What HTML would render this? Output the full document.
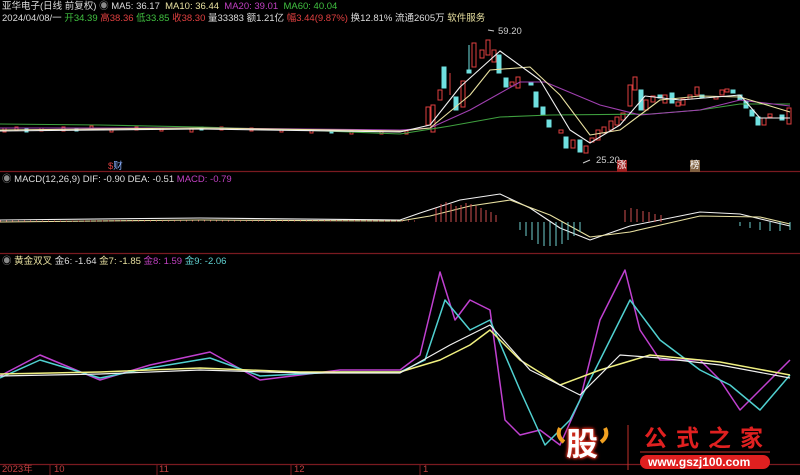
<!DOCTYPE html>
<html><head><meta charset="utf-8"><style>
html,body{margin:0;padding:0;background:#000;width:800px;height:475px;overflow:hidden}
body{position:relative;font-family:"Liberation Sans","Noto Sans CJK SC",sans-serif;font-size:9.5px}
.t{position:absolute;white-space:nowrap;line-height:12px}
</style></head><body>
<svg width="800" height="475" style="position:absolute;left:0;top:0">
<g stroke="#7a1a20" stroke-width="1.2">
<line x1="0" y1="171.5" x2="800" y2="171.5"/><line x1="0" y1="253.5" x2="800" y2="253.5"/><line x1="0" y1="464.5" x2="800" y2="464.5"/>
</g>
<g stroke="#7a1a20"><line x1="50" y1="464" x2="50" y2="475"/><line x1="157" y1="464" x2="157" y2="475"/><line x1="291" y1="464" x2="291" y2="475"/><line x1="420" y1="464" x2="420" y2="475"/></g>
<g stroke="#e04040" fill="none" stroke-width="1">
<rect x="3" y="128" width="3" height="4"/><rect x="15" y="127" width="3" height="3"/><rect x="40" y="128" width="3" height="3"/><rect x="62" y="127" width="3" height="4"/><rect x="90" y="126" width="3" height="3"/><rect x="110" y="129" width="3" height="3"/><rect x="135" y="127" width="3" height="3"/><rect x="160" y="128" width="3" height="3"/><rect x="190" y="129" width="3" height="3"/><rect x="220" y="127" width="3" height="3"/><rect x="250" y="128" width="3" height="3"/><rect x="280" y="129" width="3" height="3"/><rect x="310" y="130" width="3" height="3"/><rect x="350" y="131" width="3" height="3"/><rect x="380" y="131" width="3" height="3"/><rect x="405" y="131" width="3" height="3"/>
<rect x="426" y="107" width="4" height="18"/><rect x="431" y="105" width="4" height="27"/><rect x="438" y="90" width="4" height="10"/><line x1="450" y1="73" x2="450" y2="95"/><rect x="461" y="81" width="4" height="26"/><rect x="472" y="43" width="4" height="24"/><rect x="480" y="50" width="4" height="8"/><rect x="486" y="40" width="4" height="15"/><rect x="492" y="50" width="4" height="12"/><rect x="510" y="82" width="4" height="4"/><rect x="516" y="77" width="4" height="11"/><rect x="559" y="130" width="4" height="3"/><rect x="571" y="140" width="4" height="8"/><rect x="584" y="146" width="4" height="7"/><rect x="590" y="138" width="4" height="4"/><rect x="596" y="130" width="4" height="10"/><rect x="602" y="127" width="4" height="6"/><rect x="609" y="121" width="4" height="9"/><rect x="615" y="117" width="4" height="8"/><rect x="621" y="113" width="4" height="7"/><rect x="628" y="85" width="4" height="21"/><rect x="633" y="77" width="4" height="13"/><rect x="644" y="100" width="4" height="10"/><rect x="651" y="96" width="4" height="6"/><rect x="663" y="95" width="4" height="8"/><rect x="676" y="102" width="4" height="4"/><rect x="681" y="99" width="4" height="6"/><rect x="688" y="95" width="4" height="4"/><rect x="695" y="87" width="4" height="8"/><rect x="714" y="97" width="4" height="2"/><rect x="720" y="90" width="4" height="5"/><rect x="725" y="89" width="4" height="3"/><rect x="762" y="118" width="4" height="7"/><rect x="768" y="114" width="4" height="3"/><rect x="787" y="108" width="4" height="16"/>
</g>
<g fill="#6fe0e0" stroke="#6fe0e0">
<rect x="25" y="129" width="3" height="3"/><rect x="75" y="128" width="3" height="3"/><rect x="200" y="127" width="3" height="3"/><rect x="330" y="130" width="3" height="3"/>
<rect x="442" y="67" width="4" height="21"/><rect x="454" y="97" width="4" height="13"/><line x1="469" y1="45" x2="469" y2="73"/><rect x="467" y="70" width="4" height="3"/><rect x="497" y="55" width="4" height="18"/><rect x="504" y="78" width="4" height="9"/><rect x="529" y="83" width="4" height="2"/><rect x="534" y="92" width="4" height="15"/><rect x="541" y="107" width="4" height="8"/><rect x="547" y="120" width="4" height="7"/><rect x="564" y="137" width="4" height="11"/><rect x="578" y="140" width="4" height="12"/><rect x="639" y="90" width="4" height="20"/><rect x="658" y="95" width="4" height="3"/><rect x="670" y="93" width="4" height="10"/><rect x="700" y="95" width="4" height="3"/><rect x="731" y="90" width="4" height="3"/><rect x="738" y="95" width="4" height="5"/><rect x="744" y="101" width="4" height="7"/><rect x="750" y="110" width="4" height="6"/><rect x="756" y="117" width="4" height="8"/><rect x="780" y="115" width="4" height="5"/>
</g>
<g fill="none" stroke-width="1.1" stroke-linejoin="round">
<polyline stroke="#3fa03f" points="0,124 100,125 200,127 300,130 400,134 450,126 500,117 550,115 650,114 700,110 740,104 790,104"/>
<polyline stroke="#a040b0" points="0,128 200,128 400,130 430,128 470,110 520,82 545,82 600,105 640,115 700,110 740,100 790,106"/>
<polyline stroke="#e8e0a0" points="0,130 200,128 400,131 430,128 470,95 490,70 530,67 560,95 590,135 620,130 660,100 700,96 740,97 790,112"/>
<polyline stroke="#f0f0f0" points="0,131 200,129 400,132 430,125 460,87 500,51 540,80 570,130 590,143 620,125 645,96 680,100 740,95 760,118 790,118"/>
<polyline stroke="#f0f0f0" points="0,220 200,218 400,220 420,213 460,200 500,194 530,208 560,228 590,240 630,226 700,212 740,214 790,226"/>
<polyline stroke="#e8e0a0" points="0,222 200,220 400,221 430,216 470,206 510,200 550,215 590,237 630,232 700,216 760,217 790,224"/>
<polyline stroke="#c040d0" stroke-width="1.5" points="0,376 40,355 100,380 150,365 210,352 260,380 340,370 400,370 420,355 440,272 455,320 470,300 490,310 505,420 520,435 540,430 560,445 580,400 600,320 625,270 640,330 660,360 700,360 720,380 740,410 760,390 790,360"/>
<polyline stroke="#50d0d0" stroke-width="1.5" points="0,378 40,360 100,378 150,368 210,358 260,376 340,372 400,372 425,360 445,300 470,330 490,320 520,390 545,445 570,420 600,360 630,300 660,340 700,370 730,385 760,410 790,375"/>
<polyline stroke="#f0f080" stroke-width="1.5" points="0,374 100,372 200,368 300,372 400,372 440,360 470,345 490,330 520,360 560,385 600,370 650,355 720,362 790,375"/>
<polyline stroke="#f0f0f0" stroke-width="1.2" points="0,376 100,374 200,370 300,373 400,373 450,345 490,325 530,370 580,395 620,355 660,358 720,365 790,378"/>
</g>
<g stroke-width="1">
<line x1="436" y1="222" x2="436" y2="208" stroke="#d05050"/><line x1="441" y1="222" x2="441" y2="204" stroke="#d05050"/><line x1="446" y1="222" x2="446" y2="202" stroke="#d05050"/><line x1="451" y1="222" x2="451" y2="204" stroke="#d05050"/><line x1="456" y1="222" x2="456" y2="206" stroke="#d05050"/><line x1="461" y1="222" x2="461" y2="205" stroke="#d05050"/><line x1="466" y1="222" x2="466" y2="203" stroke="#d05050"/><line x1="471" y1="222" x2="471" y2="204" stroke="#d05050"/><line x1="476" y1="222" x2="476" y2="206" stroke="#d05050"/><line x1="481" y1="222" x2="481" y2="208" stroke="#d05050"/><line x1="486" y1="222" x2="486" y2="210" stroke="#d05050"/><line x1="491" y1="222" x2="491" y2="212" stroke="#d05050"/><line x1="496" y1="222" x2="496" y2="215" stroke="#d05050"/>
<line x1="520" y1="222" x2="520" y2="230" stroke="#70d0d0"/><line x1="526" y1="222" x2="526" y2="236" stroke="#70d0d0"/><line x1="532" y1="222" x2="532" y2="240" stroke="#70d0d0"/><line x1="538" y1="222" x2="538" y2="244" stroke="#70d0d0"/><line x1="544" y1="222" x2="544" y2="246" stroke="#70d0d0"/><line x1="550" y1="222" x2="550" y2="246" stroke="#70d0d0"/><line x1="556" y1="222" x2="556" y2="246" stroke="#70d0d0"/><line x1="562" y1="222" x2="562" y2="244" stroke="#70d0d0"/><line x1="568" y1="222" x2="568" y2="240" stroke="#70d0d0"/><line x1="574" y1="222" x2="574" y2="236" stroke="#70d0d0"/><line x1="580" y1="222" x2="580" y2="232" stroke="#70d0d0"/>
<line x1="625" y1="222" x2="625" y2="210" stroke="#d05050"/><line x1="631" y1="222" x2="631" y2="208" stroke="#d05050"/><line x1="637" y1="222" x2="637" y2="209" stroke="#d05050"/><line x1="643" y1="222" x2="643" y2="211" stroke="#d05050"/><line x1="649" y1="222" x2="649" y2="212" stroke="#d05050"/><line x1="655" y1="222" x2="655" y2="214" stroke="#d05050"/><line x1="661" y1="222" x2="661" y2="215" stroke="#d05050"/>
<line x1="740" y1="222" x2="740" y2="226" stroke="#70d0d0"/><line x1="750" y1="222" x2="750" y2="228" stroke="#70d0d0"/><line x1="760" y1="222" x2="760" y2="230" stroke="#70d0d0"/><line x1="770" y1="222" x2="770" y2="231" stroke="#70d0d0"/><line x1="780" y1="222" x2="780" y2="231" stroke="#70d0d0"/><line x1="790" y1="222" x2="790" y2="230" stroke="#70d0d0"/>
</g>
<g stroke="#d05050"><line x1="0" y1="221" x2="420" y2="221" stroke-dasharray="1 5"/></g>
<line x1="583" y1="163" x2="590" y2="160" stroke="#ccc"/>
<line x1="488" y1="30" x2="494" y2="31" stroke="#ccc"/>
<line x1="628" y1="425" x2="628" y2="470" stroke="#c0302a"/>
<line x1="640" y1="452" x2="770" y2="452" stroke="#c0302a"/>
<rect x="640" y="455" width="130" height="14" rx="7" fill="#e02020"/>
<path d="M560 428 q-4 8 4 14 M605 428 q4 8 -4 14" stroke="#f0a020" stroke-width="4" fill="none"/>
</svg>
<div class="t" style="left:2px;top:1px;color:#ddd">亚华电子(日线 前复权) <span style="color:#888">◉</span> MA5: 36.17 &nbsp;<span style="color:#e8e0a0">MA10: 36.44</span> &nbsp;<span style="color:#c040c0">MA20: 39.01</span> &nbsp;<span style="color:#40c040">MA60: 40.04</span></div>
<div class="t" style="left:2px;top:13px;color:#ddd">2024/04/08/一 <span style="color:#40c040">开34.39</span> <span style="color:#e04040">高38.36</span> <span style="color:#40c040">低33.85</span> <span style="color:#e04040">收38.30</span> 量33383 额1.21亿 <span style="color:#e04040">幅3.44(9.87%)</span> 换12.81% 流通2605万 <span style="color:#e8e0a0">软件服务</span></div>
<div class="t" style="left:498px;top:26px;color:#ccc">59.20</div>
<div class="t" style="left:596px;top:155px;color:#ccc">25.20</div>
<div class="t" style="left:108px;top:161px;color:#e04040">$<span style="color:#8ab0ff">财</span></div>
<div class="t" style="left:617px;top:160px;color:#fff;background:#a02020">涨</div>
<div class="t" style="left:690px;top:160px;color:#fff;background:#806040">榜</div>
<div class="t" style="left:2px;top:174px;color:#ddd"><span style="color:#888">◉</span> MACD(12,26,9) DIF: -0.90 DEA: -0.51 <span style="color:#c040c0">MACD: -0.79</span></div>
<div class="t" style="left:2px;top:256px;color:#ddd"><span style="color:#888">◉</span> <span style="color:#e8e0a0">黄金双叉</span> 金6: -1.64 <span style="color:#e8e0a0">金7: -1.85</span> <span style="color:#c040c0">金8: 1.59</span> <span style="color:#60d0d0">金9: -2.06</span></div>
<div class="t" style="left:2px;top:464px;color:#c04040">2023年<span style="position:absolute;left:52px">10</span><span style="position:absolute;left:157px">11</span><span style="position:absolute;left:292px">12</span><span style="position:absolute;left:421px">1</span></div>
<div class="t" style="left:566px;top:424px;font-size:32px;line-height:40px;font-weight:bold;color:#fff;text-shadow:0 0 2px #e03020,0 0 3px #e03020,0 0 4px #e03020">股</div>
<div class="t" style="left:644px;top:424px;font-size:23px;line-height:28px;color:#e02020;font-weight:bold;letter-spacing:9px">公式之家</div>
<div class="t" style="left:648px;top:456px;font-size:12px;font-weight:bold;color:#fff">www.gszj100.com</div>
</body></html>
